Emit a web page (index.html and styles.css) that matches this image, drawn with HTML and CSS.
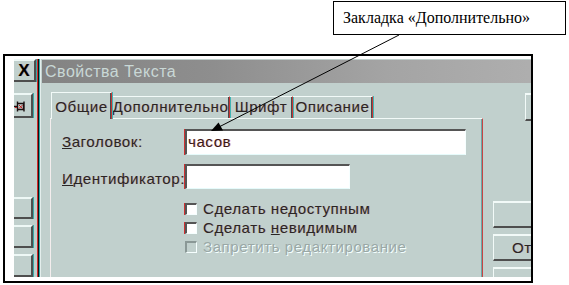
FILE: index.html
```html
<!DOCTYPE html>
<html lang="ru">
<head>
    <meta charset="UTF-8">
    <meta name="viewport" content="width=device-width, initial-scale=1.0">
    <title>Свойства Текста</title>
    <link rel="stylesheet" href="styles.css">
</head>
<body>
    <div class="page">
        <div class="callout">Закладка «Дополнительно»</div>

        <div class="shot">
            <div class="screen">
                <div class="parent-strip">
                    <div class="pbtn pbtn-close">X</div>
                    <div class="pbtn pbtn-pin">
                        <svg width="13" height="13" viewBox="0 0 13 13">
                            <path d="M0 6.5 H3.5 M3.5 1.5 V11.5 M4 3.5 H9.5 V9.5 H4 M10 1.5 V11.5" fill="none" stroke="#1a1010" stroke-width="1.4"/>
                            <path d="M1 7.5 H3 M5 5 L8.5 8.5 M8.5 5 L5 8.5" fill="none" stroke="#c02020" stroke-width="1"/>
                        </svg>
                    </div>
                    <div class="pbtn pbtn-low first"></div>
                    <div class="pbtn pbtn-low"></div>
                    <div class="pbtn pbtn-low"></div>
                </div>

                <div class="dialog">
                    <div class="dlg-edge"></div>
                    <div class="dlg-main">
                        <div class="titlebar">Свойства Текста</div>
                        <div class="dlg-body">
                            <div class="tabs-area">
                                <div class="tabs">
                                    <div class="tab active tab-general">Общие</div>
                                    <div class="tab tab-extra">Дополнительно</div>
                                    <div class="tab tab-font">Шрифт</div>
                                    <div class="tab tab-desc">Описание</div>
                                </div>
                                <div class="panel">
                                    <div class="fields">
                                        <label class="field-label"><u>З</u>аголовок:</label>
                                        <div class="input input-title">часов</div>
                                        <label class="field-label second"><u>И</u>дентификатор:</label>
                                        <div class="input input-id"></div>
                                    </div>
                                    <div class="checks">
                                        <div class="check-row">
                                            <span class="box"></span>
                                            <span class="check-text">Сделать не<u>д</u>оступным</span>
                                        </div>
                                        <div class="check-row">
                                            <span class="box"></span>
                                            <span class="check-text">Сделать <u>н</u>евидимым</span>
                                        </div>
                                        <div class="check-row disabled">
                                            <span class="box"></span>
                                            <span class="check-text">Запретить редактирование</span>
                                        </div>
                                    </div>
                                </div>
                            </div>
                            <div class="side-buttons">
                                <div class="sbtn sbtn-top"></div>
                                <div class="sbtn sbtn-ok"></div>
                                <div class="sbtn sbtn-cancel">От</div>
                                <div class="sbtn sbtn-help"></div>
                            </div>
                        </div>
                    </div>
                </div>
            </div>
        </div>

        <!-- pointer from the note to the tab -->
        <svg class="pointer" width="569" height="285" viewBox="0 0 569 285">
            <line x1="399" y1="35" x2="216" y2="128.5" stroke="#000" stroke-width="1"/>
            <polygon points="211,131 223,130.5 218.5,122.5" fill="#000"/>
        </svg>
    </div>
</body>
</html>
```

FILE: styles.css
```css
body {
    margin: 0;
    background-color: white;
}
.page {
    position: relative;
    width: 569px;
    height: 285px;
    overflow: hidden;
}
.callout {
    box-sizing: border-box;
    margin: 1px 0 0 333px;
    width: 233px;
    height: 34px;
    border: 1px solid #000;
    padding: 5px 0 0 9px;
    font-family: "Liberation Serif", serif;
    font-size: 16px;
    line-height: 22px;
    color: #000;
}
.shot {
    box-sizing: border-box;
    margin: 19px 0 0 3px;
    width: 530px;
    height: 229px;
    border: 2px solid #000;
    padding: 3px 0 4px 9px;
    background-color: white;
}
.screen {
    display: flex;
    height: 218px;
    overflow: hidden;
    background-color: #c1d0cd;
    font-family: "Liberation Sans", Arial, sans-serif;
    font-size: 15px;
    letter-spacing: 0.6px;
    color: #2a2424;
}

/* parent window strip on the left */
.parent-strip {
    width: 23px;
    flex: none;
    display: flex;
    flex-direction: column;
    align-items: flex-start;
}
.pbtn {
    box-sizing: border-box;
    border-top: 2px solid #eef8f6;
    border-right: 2px solid #4e4e4e;
    border-bottom: 2px solid #4e4e4e;
    box-shadow: 1px 0 0 #3aa8a8;
}
.pbtn-close {
    width: 22px;
    height: 23px;
    font-weight: bold;
    font-size: 17px;
    letter-spacing: 0;
    line-height: 19px;
    text-align: center;
    color: #000;
    text-shadow: 1px 0 rgba(200, 0, 0, 0.25);
}
.pbtn-pin {
    width: 19px;
    height: 28px;
    margin-top: 11px;
    padding: 5px 0 0 0;
}
.pbtn-pin svg {
    display: block;
}
.pbtn-low {
    width: 19px;
    height: 27px;
    margin-top: 6px;
}
.pbtn-low.first {
    margin-top: 79px;
}

/* dialog */
.dialog {
    flex: 1;
    display: flex;
}
.dlg-edge {
    width: 5px;
    flex: none;
    background: linear-gradient(to right,
        #d42a2a 0, #d42a2a 1px,
        #111 1px, #111 2px,
        #2aa6a6 2px, #2aa6a6 3px,
        #e4eeec 3px, #e4eeec 4px,
        #c1d0cd 4px);
}
.dlg-main {
    flex: 1;
    display: flex;
    flex-direction: column;
    padding-top: 1px;
}
.titlebar {
    height: 25px;
    line-height: 23px;
    padding-left: 3px;
    font-size: 16px;
    letter-spacing: 0.5px;
    color: #c9d8d6;
    background: linear-gradient(to right, #838383 0, #8e8e8e 30%, #a4a4a4 60%, #b4b4b4 100%);
}
.dlg-body {
    flex: 1;
    display: flex;
}
.tabs-area {
    width: 433px;
    flex: none;
    margin: 9px 0 0 8px;
    display: flex;
    flex-direction: column;
}
.tabs {
    height: 26px;
    display: flex;
    align-items: flex-end;
    padding-left: 1px;
}
.tab {
    box-sizing: border-box;
    height: 22px;
    border-top: 1px solid #f2faf8;
    border-right: 1px solid #c83434;
    box-shadow: -1px 0 0 #4a4a4a inset, 1px 0 0 #40b4b4;
    line-height: 20px;
    text-align: center;
    text-shadow: 1px 0 rgba(210, 20, 20, 0.22);
}
.tab.active {
    height: 27px;
    margin-bottom: -1px;
    padding-top: 4px;
    border-left: 1px solid #f2faf8;
    background-color: #c1d0cd;
    position: relative;
    z-index: 1;
}
.tab-general { width: 61px; }
.tab-extra { width: 118px; }
.tab-font { width: 63px; }
.tab-desc { width: 80px; }

.panel {
    flex: 1;
    border-top: 1px solid #f2faf8;
    border-left: 1px solid #f4eeee;
    border-right: 1px solid #c84444;
    box-shadow: -1px 0 0 #6aa8a8 inset;
    padding: 10px 0 0 11px;
}
.fields {
    display: grid;
    grid-template-columns: 123px auto;
    grid-template-rows: 26px 25px;
    row-gap: 9px;
    justify-items: start;
}
.field-label {
    line-height: 26px;
    text-shadow: 1px 0 rgba(210, 20, 20, 0.22);
}
.field-label.second {
    line-height: 25px;
    padding-top: 2px;
}
.input {
    box-sizing: border-box;
    height: 100%;
    background-color: white;
    border-top: 2px solid #555;
    border-left: 2px solid #555;
    border-right: 1px solid #f6ffff;
    border-bottom: 1px solid #e6fbfb;
    box-shadow: -1px 0 0 #d03030;
    padding-left: 1px;
    line-height: 21px;
    color: #3a1616;
    text-shadow: 1px 0 rgba(220, 30, 30, 0.3);
}
.input-title { width: 281px; }
.input-id { width: 165px; }

.checks {
    margin: 10px 0 0 123px;
}
.check-row {
    height: 19px;
    display: flex;
    align-items: center;
    gap: 6px;
    line-height: 19px;
}
.box {
    box-sizing: border-box;
    width: 12px;
    height: 12px;
    background-color: white;
    border-top: 2px solid #555;
    border-left: 2px solid #555;
    border-right: 1px solid #f6ffff;
    border-bottom: 1px solid #f6ffff;
    box-shadow: -1px 0 0 #d03030;
}
.check-text {
    text-shadow: 1px 0 rgba(210, 20, 20, 0.22);
}
.check-row.disabled .box {
    background-color: #c1d0cd;
    border-top-color: #8a9896;
    border-left-color: #8a9896;
    box-shadow: none;
}
.check-row.disabled .check-text {
    color: #9aa8a6;
    text-shadow: 1px 1px 0 #f4ffff;
}

/* buttons on the right */
.side-buttons {
    margin-left: 10px;
    display: flex;
    flex-direction: column;
    align-items: flex-start;
    gap: 6px;
}
.sbtn {
    box-sizing: border-box;
    width: 90px;
    height: 27px;
    flex: none;
    border-top: 2px solid #f2faf8;
    border-left: 1px solid #f2faf8;
    border-bottom: 2px solid #4e4e4e;
    line-height: 23px;
    white-space: nowrap;
    text-shadow: 1px 0 rgba(210, 20, 20, 0.25);
}
.sbtn-top {
    height: 28px;
    margin: 10px 0 0 32px;
}
.sbtn-ok {
    margin-top: 74px;
}
.sbtn-cancel {
    padding-left: 18px;
}

.pointer {
    position: absolute;
    left: 0;
    top: 0;
    pointer-events: none;
}
```
